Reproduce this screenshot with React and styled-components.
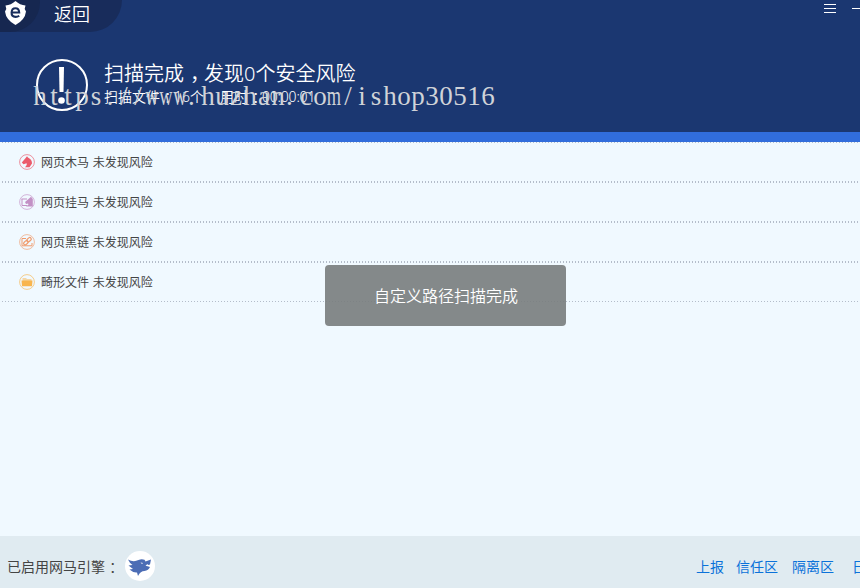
import React from 'react';
import styled, { createGlobalStyle } from 'styled-components';

const GlobalStyle = createGlobalStyle`
  * {
    box-sizing: border-box;
  }

  body {
    margin: 0;
    overflow: hidden;
    font-family: "Noto Sans", "Noto Sans CJK SC", sans-serif;
  }
`;

const Window = styled.div`
  position: relative;
  display: flex;
  flex-direction: column;
  width: 860px;
  height: 588px;
  overflow: hidden;
  background: #f0f9ff;
`;

const Header = styled.header`
  height: 132px;
  flex: none;
  background: #1b3771;
  color: #fff;
`;

const TitleBar = styled.div`
  display: flex;
  justify-content: space-between;
  height: 32px;
`;

const BackTab = styled.div`
  display: flex;
  width: 122px;
  height: 32px;
  background: #182c5b;
  border-bottom-right-radius: 32px;
  overflow: hidden;
`;

const LogoBox = styled.div`
  width: 40px;
  height: 32px;
  flex: none;
  background: #162750;
  border-bottom-right-radius: 30px;
`;

const BackButton = styled.button`
  margin: 0 0 0 14px;
  padding: 0;
  height: 28px;
  border: none;
  background: none;
  color: #fff;
  font-family: inherit;
  font-size: 18px;
  line-height: 28px;
  font-weight: 350;
  white-space: nowrap;
`;

const WindowControls = styled.div`
  display: flex;
  width: 36px;
  height: 20px;
`;

const Summary = styled.div`
  display: flex;
  padding: 26px 0 0 35px;
`;

const SummaryText = styled.div`
  margin-left: 15px;
  padding-top: 1px;
  white-space: nowrap;
`;

const Title = styled.div`
  height: 29px;
  font-size: 20px;
  line-height: 29px;
  font-weight: 350;
`;

const Detail = styled.div`
  display: flex;
  gap: 16px;
  font-size: 14px;
  line-height: 18px;
  font-weight: 350;
`;

// Full-width punctuation, moved to the middle of its cell
const Punct = styled.span`
  display: inline-block;
  width: 1em;
  padding-left: 0.3em;
`;

const Clock = styled.span`
  letter-spacing: -0.2px;
`;

const Progress = styled.div`
  height: 10px;
  flex: none;
  background: #316ddc;
`;

const dots = 'repeating-linear-gradient(90deg, #b4bdca 0 1px, transparent 1px 3px)';

const Results = styled.main`
  flex: 1;
  padding-top: 1px;
  background: ${dots} 2px 0 / 100% 1px no-repeat;
`;

const ResultRow = styled.div`
  display: flex;
  align-items: center;
  height: ${props => (props.$last ? 39 : 40)}px;
  padding: 0 0 ${props => (props.$last ? 1 : 2)}px 19px;
  background: ${dots} 2px 100% / 100% ${props => (props.$last ? 1 : 2)}px no-repeat;
  color: #444;
  font-size: 12px;
`;

const ResultText = styled.span`
  margin-left: 6px;
  padding-top: 2px;
  line-height: 18px;
  word-spacing: 0.5px;
  white-space: nowrap;
`;

const Toast = styled.div`
  position: absolute;
  left: 325px;
  top: 265px;
  width: 241px;
  height: 61px;
  padding-left: 1px;
  border-radius: 4px;
  background: rgba(120, 124, 125, 0.9);
  color: #fff;
  font-size: 16px;
  line-height: 62px;
  font-weight: 350;
  text-align: center;
`;

const Watermark = styled.div`
  position: absolute;
  left: 33px;
  top: 80px;
  display: flex;
  color: #d0d3d8;
  font-family: "Liberation Serif", serif;
  font-size: 27px;
  line-height: 32px;
  white-space: nowrap;
`;

const Glyph = styled.span`
  display: flex;
  justify-content: ${props => (props.$left ? 'flex-start' : 'center')};
  width: 14px;
  padding-left: ${props => (props.$left ? 1 : 0)}px;
  transform: scaleX(${props => (props.$wide ? 0.68 : 1)});
`;

const Footer = styled.footer`
  display: flex;
  justify-content: space-between;
  height: 52px;
  flex: none;
  padding-left: 7px;
  background: #e0ebf1;
  font-size: 14px;
  line-height: 20px;
`;

const Engine = styled.div`
  display: flex;
  color: #444;
  line-height: 61px;
  white-space: nowrap;
`;

const Links = styled.nav`
  display: flex;
  width: 164px;
  line-height: 61px;
`;

const Link = styled.a`
  flex: none;
  margin-right: ${props => props.$gap}px;
  color: #0b72d9;
  white-space: nowrap;
`;

const EngineBadge = styled.span`
  display: flex;
  margin: 15px 0 0 6px;
`;

const ShieldLogo = () => (
  <svg width="40" height="32">
    <path d="M15.5 1 Q20 5 25.5 5.5 L24.7 9 26 11.5 Q25 20 15.5 25 Q6 20 5 11.5 L6.3 9 5.5 5.5 Q11 5 15.5 1Z" fill="#fff" />
    <path d="M12 12.5H19.2Q19 8.3 15.4 8.3T11.6 12.5T15.6 16.9Q17.7 16.9 19.2 15.7" fill="none" stroke="#182d5c" strokeWidth="2.1" />
  </svg>
);

const AlertIcon = () => (
  <svg width="54" height="54">
    <circle cx="27" cy="27" r="25" fill="none" stroke="#fff" strokeWidth="2" />
    <path d="M24 9H29L28.5 34H24.5Z" fill="#fff" />
    <circle cx="26.5" cy="42.5" r="3.3" fill="#fff" />
  </svg>
);

const EngineIcon = () => (
  <svg width="30" height="30" viewBox="0.5 0.5 30 30">
    <circle cx="15.5" cy="15.5" r="15" fill="#fff" />
    <path d="M3.5 9Q9 12 14 9.5Q17 8 20 9.2L21 11 26.5 9 25.5 14 23.5 14.5 23 13.5 21 15.2 24 16 25.5 16.5Q24 20 20 20.5Q16 20.5 13.5 25.5L12.5 22Q9 22.5 5 19L8.5 18.5 4 15 8 14.5Q5 12.5 3.5 9Z" fill="#4c6db5" />
    <path d="M16 12 18.5 12.5 17.5 13.5Z" fill="#fff" />
  </svg>
);

const RESULTS = [
  {
    name: '网页木马',
    color: '#eb5b6b',
    shape: <path d="M2.8 8.5 6 4.8 8 2.2 9 3.5Q13.2 5.5 13 9.5L10.5 13.2H6Q8.5 10.8 7.5 9.2L4.5 10.2Z" fill="#eb5b6b" />,
  },
  {
    name: '网页挂马',
    color: '#c391c5',
    shape: (
      <g fill="#c391c5">
        <path d="M2.5 5H8M3 5V11.5H8" fill="none" stroke="#c391c5" />
        <path d="M6 8 9.5 5 12 2.8 13.8 5V12.5H7L9.5 10.5 9 9.5 7 10Z" />
      </g>
    ),
  },
  {
    name: '网页黑链',
    color: '#f09b6c',
    shape: (
      <g fill="none" stroke="#f09b6c">
        <path d="M7 4.5H3V11.8H13V9" />
        <rect x="7.5" y="4.2" width="5" height="3" rx="1.5" transform="rotate(-40 10 5.7)" strokeWidth="1.2" />
        <rect x="4.4" y="7.2" width="5" height="3" rx="1.5" transform="rotate(-40 6.9 8.7)" strokeWidth="1.2" />
      </g>
    ),
  },
  {
    name: '畸形文件',
    color: '#f8b54d',
    shape: (
      <g fill="#f8b54d">
        <path d="M3.5 7V4H7L8 5H12.5V7" opacity=".5" />
        <path d="M2.5 6.5H13.5L13 12.3H3Z" />
      </g>
    ),
  },
];

const LINKS = [
  { label: '上报', gap: 12 },
  { label: '信任区', gap: 14 },
  { label: '隔离区', gap: 18 },
  { label: '日志', gap: 0 },
];

const WATERMARK_TEXT = 'https://www.huzhan.com/ishop30516';

const App = () => {
  return (
    <>
      <GlobalStyle />
      <Window>
        <Header>
          <TitleBar>
            <BackTab>
              <LogoBox>
                <ShieldLogo />
              </LogoBox>
              <BackButton>返回</BackButton>
            </BackTab>
            <WindowControls>
              <svg width="36" height="20">
                <path d="M0 4.5H12M0 8.5H12M0 12.5H12M28 8.5H36" stroke="#fff" />
              </svg>
            </WindowControls>
          </TitleBar>
          <Summary>
            <AlertIcon />
            <SummaryText>
              <Title>扫描完成<Punct>，</Punct>发现0个安全风险</Title>
              <Detail>
                <span>扫描文件<Punct>：</Punct>16个</span>
                <span>用时<Punct>：</Punct><Clock>00:00:01</Clock></span>
              </Detail>
            </SummaryText>
          </Summary>
        </Header>
        <Progress />
        <Results>
          {RESULTS.map((item, i) => (
            <ResultRow key={item.name} $last={i === RESULTS.length - 1}>
              <svg width="16" height="16">
                <circle cx="8" cy="8" r="7.4" fill="none" stroke={item.color} strokeOpacity=".65" />
                {item.shape}
              </svg>
              <ResultText>{item.name} 未发现风险</ResultText>
            </ResultRow>
          ))}
        </Results>
        <Footer>
          <Engine>
            <span>已启用网马引擎<Punct>：</Punct></span>
            <EngineBadge>
              <EngineIcon />
            </EngineBadge>
          </Engine>
          <Links>
            {LINKS.map((link) => (
              <Link key={link.label} $gap={link.gap}>{link.label}</Link>
            ))}
          </Links>
        </Footer>
        <Toast>自定义路径扫描完成</Toast>
        <Watermark>
          {WATERMARK_TEXT.split('').map((char, i) => (
            <Glyph key={i} $wide={'wm'.includes(char)} $left={char === '.'}>{char}</Glyph>
          ))}
        </Watermark>
      </Window>
    </>
  );
};

export default App;
